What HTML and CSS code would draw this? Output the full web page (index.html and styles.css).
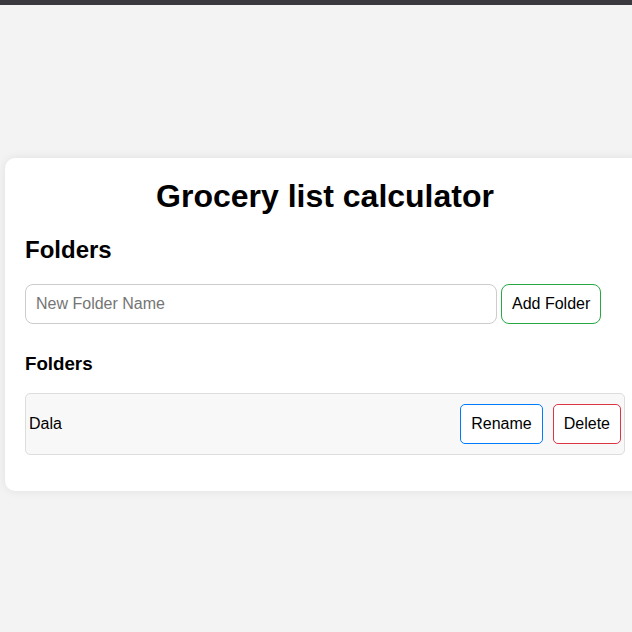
FILE: index.html
```html
<!DOCTYPE html>
<html>
<head>
<meta charset="utf-8">
<link rel="stylesheet" href="styles.css">
</head>
<body>
<div class="topbar"></div>
<main class="card">
  <h1 class="title">Grocery list calculator</h1>
  <h2 class="section-title">Folders</h2>
  <div class="add-row">
    <input class="folder-input" type="text" placeholder="New Folder Name">
    <button class="btn btn-add">Add Folder</button>
  </div>
  <h3 class="list-title">Folders</h3>
  <div class="folder-item">
    <span class="folder-name">Dala</span>
    <div class="folder-actions">
      <button class="btn btn-rename">Rename</button>
      <button class="btn btn-delete">Delete</button>
    </div>
  </div>
</main>
</body>
</html>
```
FILE: styles.css
```css
html, body {
  margin: 0;
  padding: 0;
}
body {
  background: #f3f3f3;
  font-family: "Liberation Sans", Arial, sans-serif;
  color: #000;
  width: 632px;
  height: 632px;
  overflow: hidden;
}
.topbar {
  height: 5px;
  background: #39393e;
}
.card {
  box-sizing: border-box;
  width: 640px;
  margin: 153px 0 0 5px;
  padding: 20px;
  background: #fff;
  border-radius: 10px;
  box-shadow: 0 0 10px rgba(0, 0, 0, 0.08);
}
.title {
  margin: 0 0 21px;
  font-size: 32px;
  text-align: center;
  line-height: 37px;
}
.section-title {
  margin: 0 0 20px;
  font-size: 24px;
  line-height: 28px;
}
.add-row {
  display: flex;
  gap: 4px;
  align-items: center;
}
.folder-input {
  box-sizing: border-box;
  width: 472px;
  height: 40px;
  padding: 10px;
  font-size: 16px;
  font-family: "Liberation Sans", Arial, sans-serif;
  border: 1px solid #ccc;
  border-radius: 8px;
  outline: none;
}
.folder-input::placeholder {
  color: #757575;
}
.btn {
  box-sizing: border-box;
  height: 40px;
  padding: 0 10px;
  font-size: 16px;
  font-family: "Liberation Sans", Arial, sans-serif;
  background: #fff;
  color: #000;
  border: 1px solid #ccc;
  border-radius: 5px;
  cursor: pointer;
}
.btn-add {
  border-color: #28a745;
  border-radius: 8px;
}
.btn-rename {
  border-color: #007bff;
}
.btn-delete {
  border-color: #dc3545;
}
.list-title {
  margin: 29px 0 18px;
  font-size: 18.72px;
  line-height: 22px;
}
.folder-item {
  display: flex;
  align-items: center;
  justify-content: space-between;
  padding: 10px 3px;
  background: #f8f8f8;
  border: 1px solid #ddd;
  border-radius: 5px;
  margin-bottom: 16px;
}
.folder-name {
  font-size: 16px;
}
.folder-actions {
  display: flex;
  gap: 10px;
}
```
